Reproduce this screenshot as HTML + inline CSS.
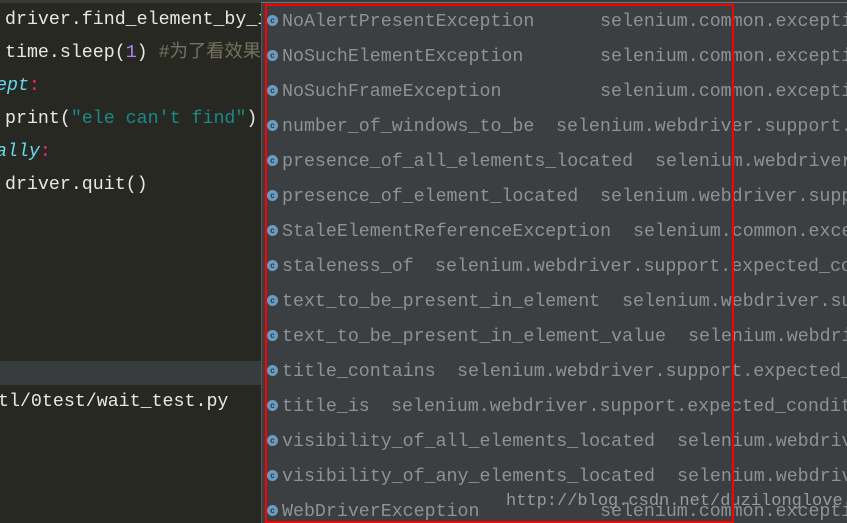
<!DOCTYPE html>
<html><head><meta charset="utf-8"><style>
html,body{margin:0;width:847px;height:523px;overflow:hidden;}
body{background:#272822;position:relative;font-family:"Liberation Mono","Noto Sans CJK SC",monospace;}
#wrap{position:absolute;left:0;top:0;width:847px;height:523px;overflow:hidden;}
.t{position:absolute;white-space:pre;font-size:18.3px;line-height:22px;}
.c{color:#e8e8e2;}
#band{position:absolute;left:0;top:361px;width:262px;height:24px;background:#393c3e;}
#top{position:absolute;left:0;top:0;width:847px;height:3px;background:#3a3a36;}
#pop{position:absolute;left:261px;top:2px;width:586px;height:521px;background:#3c3f41;border-left:1px solid #555;border-top:1px solid #777;overflow:hidden;}
#red{position:absolute;left:265px;top:4px;width:465px;height:515px;border:2px solid #f00;}
.r{position:absolute;white-space:pre;font-size:18.3px;line-height:22px;color:#8c9296;}
.ic{position:absolute;left:267px;width:11px;height:11px;border-radius:50%;background:#6b9bbf;color:#2b3a45;font:bold 8px "Liberation Sans",sans-serif;text-align:center;line-height:11px;}
</style></head><body><div id="wrap">
<div id="top"></div>
<div class="t c" style="left:5px;top:9px">driver.find_element_by_id</div>
<div class="t c" style="left:5px;top:42px">time.sleep(<span style="color:#ae81ff">1</span>) <span style="color:#75715e">#为了看效果</span></div>
<div class="t" style="left:-4px;top:75px;color:#66d9ef;font-style:italic">ept<span style="color:#f92672;font-style:normal">:</span></div>
<div class="t c" style="left:5px;top:108px">print(<span style="color:#1a8a87">"ele can't find"</span>)</div>
<div class="t" style="left:-4px;top:141px;color:#66d9ef;font-style:italic">ally<span style="color:#f92672;font-style:normal">:</span></div>
<div class="t c" style="left:5px;top:174px">driver.quit()</div>
<div id="band"></div>
<div class="t c" style="left:-2px;top:391px">tl/0test/wait_test.py</div>
<div id="pop"></div>
<div class="r" style="left:282px;top:11px">NoAlertPresentException</div><div class="r" style="left:600px;top:11px">selenium.common.exceptions</div><div class="ic" style="top:15px">c</div>
<div class="r" style="left:282px;top:46px">NoSuchElementException</div><div class="r" style="left:600px;top:46px">selenium.common.exceptions</div><div class="ic" style="top:50px">c</div>
<div class="r" style="left:282px;top:81px">NoSuchFrameException</div><div class="r" style="left:600px;top:81px">selenium.common.exceptions</div><div class="ic" style="top:85px">c</div>
<div class="r" style="left:282px;top:116px">number_of_windows_to_be</div><div class="r" style="left:556px;top:116px">selenium.webdriver.support.expected</div><div class="ic" style="top:120px">c</div>
<div class="r" style="left:282px;top:151px">presence_of_all_elements_located</div><div class="r" style="left:655px;top:151px">selenium.webdriver.support</div><div class="ic" style="top:155px">c</div>
<div class="r" style="left:282px;top:186px">presence_of_element_located</div><div class="r" style="left:600px;top:186px">selenium.webdriver.support</div><div class="ic" style="top:190px">c</div>
<div class="r" style="left:282px;top:221px">StaleElementReferenceException</div><div class="r" style="left:633px;top:221px">selenium.common.exceptions</div><div class="ic" style="top:225px">c</div>
<div class="r" style="left:282px;top:256px">staleness_of</div><div class="r" style="left:435px;top:256px">selenium.webdriver.support.expected_co</div><div class="ic" style="top:260px">c</div>
<div class="r" style="left:282px;top:291px">text_to_be_present_in_element</div><div class="r" style="left:622px;top:291px">selenium.webdriver.support</div><div class="ic" style="top:295px">c</div>
<div class="r" style="left:282px;top:326px">text_to_be_present_in_element_value</div><div class="r" style="left:688px;top:326px">selenium.webdriver</div><div class="ic" style="top:330px">c</div>
<div class="r" style="left:282px;top:361px">title_contains</div><div class="r" style="left:457px;top:361px">selenium.webdriver.support.expected_</div><div class="ic" style="top:365px">c</div>
<div class="r" style="left:282px;top:396px">title_is</div><div class="r" style="left:391px;top:396px">selenium.webdriver.support.expected_condit</div><div class="ic" style="top:400px">c</div>
<div class="r" style="left:282px;top:431px">visibility_of_all_elements_located</div><div class="r" style="left:677px;top:431px">selenium.webdriver</div><div class="ic" style="top:435px">c</div>
<div class="r" style="left:282px;top:466px">visibility_of_any_elements_located</div><div class="r" style="left:677px;top:466px">selenium.webdriver</div><div class="ic" style="top:470px">c</div>
<div class="r" style="left:282px;top:501px">WebDriverException</div><div class="r" style="left:600px;top:501px">selenium.common.exceptions</div><div class="ic" style="top:505px">c</div>
<div class="r" style="left:506px;top:491px;color:#9a9a9a;font-size:17px">http://blog.csdn.net/duzilonglove</div>
<div id="red"></div>
</div></body></html>
